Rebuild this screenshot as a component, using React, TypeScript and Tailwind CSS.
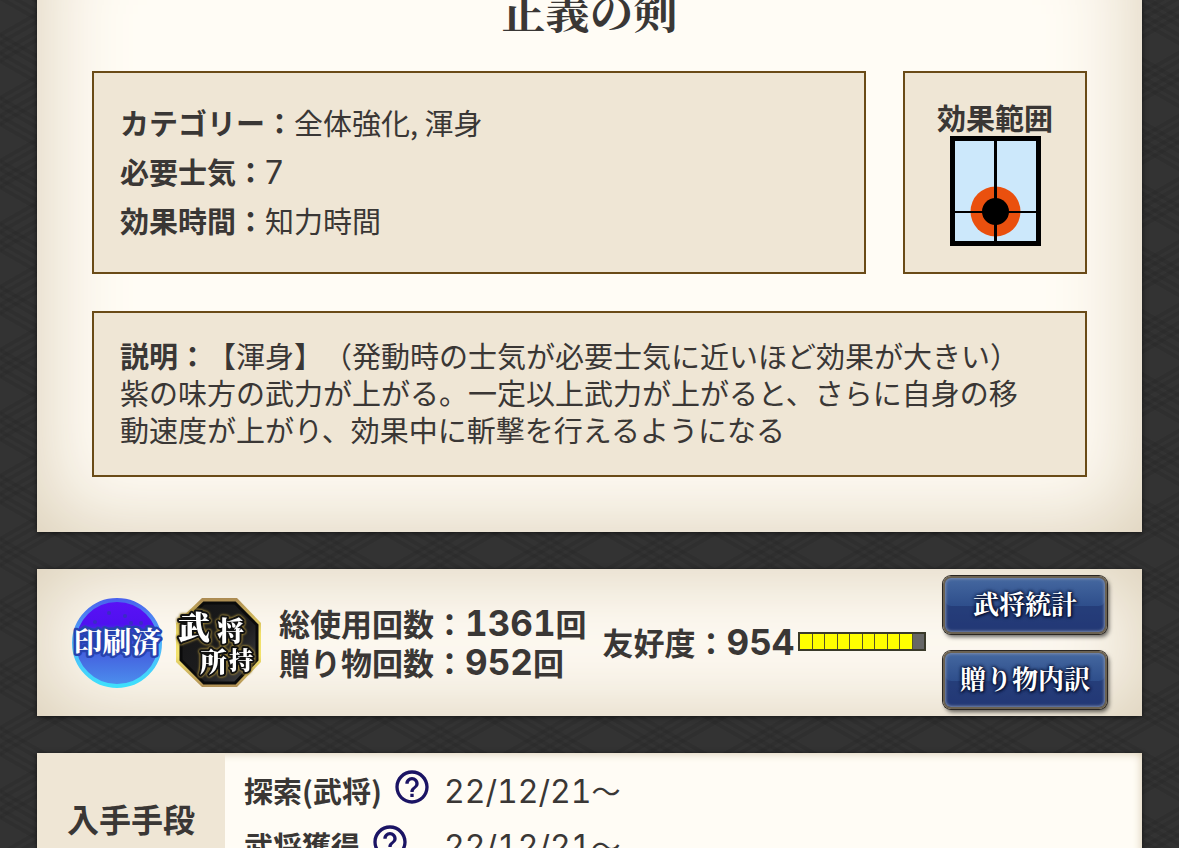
import type { ReactNode } from "react";
import { MdHelpOutline } from "react-icons/md";

const sans = "font-['Noto_Sans_CJK_JP',sans-serif]";
const serif = "font-['Noto_Serif_CJK_JP','Liberation_Serif',serif]";
const paper =
  "bg-[#fffcf5] shadow-[inset_0_0_92px_#d8cbb2,0_1px_5px_rgba(0,0,0,0.6)]";

const latticeOffsets = [-76, -68, -58, -50, -13, -5, 5, 13, 50, 58, 68, 76];

function Backdrop() {
  return (
    <svg aria-hidden="true" className="absolute inset-0 -z-10 h-full w-full">
      <defs>
        <pattern id="lattice" width="110" height="63" y="48" patternUnits="userSpaceOnUse">
          <rect width="110" height="63" fill="#333333" />
          <g stroke="#262626" strokeOpacity="0.32" strokeWidth="4">
            {latticeOffsets.map((d) => (
              <g key={d}>
                <path d={`M0 ${d} L110 ${63 + d}`} />
                <path d={`M0 ${63 + d} L110 ${d}`} />
              </g>
            ))}
          </g>
        </pattern>
      </defs>
      <rect width="100%" height="100%" fill="url(#lattice)" />
    </svg>
  );
}

function Box({ className = "", children }: { className?: string; children: ReactNode }) {
  return (
    <div className={`border-2 border-[#6a4b17] bg-[#efe6d5] px-[26px] ${className}`}>{children}</div>
  );
}

function RangeDiagram() {
  return (
    <svg role="img" aria-label="自身中心の円" viewBox="0 0 91 110" className="h-[110px] w-[91px]">
      <rect width="91" height="110" fill="#000" />
      <rect x="5" y="5" width="81" height="100" fill="#cce8fb" />
      <circle cx="45.5" cy="75.5" r="25" fill="#ea500e" />
      <path d="M5 76 H86" stroke="#000" strokeWidth="2" />
      <path d="M45.5 5 V105" stroke="#000" strokeWidth="3" />
      <circle cx="45.5" cy="75.5" r="13.5" fill="#000" />
    </svg>
  );
}

function PrintedBadge() {
  return (
    <svg role="img" aria-label="印刷済" viewBox="0 0 92 90" className="h-[90px] w-[92px] shrink-0">
      <defs>
        <linearGradient id="orb" x1="0" y1="0" x2="0" y2="1">
          <stop offset="0" stopColor="#5a12f6" />
          <stop offset="0.28" stopColor="#5010f0" />
          <stop offset="0.38" stopColor="#3a3fdc" />
          <stop offset="0.65" stopColor="#4565e0" />
          <stop offset="1" stopColor="#4c90ee" />
        </linearGradient>
        <linearGradient id="rim" x1="0" y1="0" x2="0" y2="1">
          <stop offset="0" stopColor="#4a63ee" />
          <stop offset="0.5" stopColor="#4fb4fa" />
          <stop offset="1" stopColor="#3ee0fc" />
        </linearGradient>
      </defs>
      <circle cx="46" cy="45" r="43" fill="url(#orb)" stroke="url(#rim)" strokeWidth="4" />
      <g fill="#3a2cc4">
        <circle cx="38" cy="15" r="2" />
        <circle cx="54" cy="18" r="2" />
        <circle cx="24" cy="24" r="2" />
        <circle cx="60" cy="25" r="2" />
        <circle cx="70" cy="25" r="2" />
      </g>
      <text
        x="46"
        y="55"
        textAnchor="middle"
        fill="#fff"
        stroke="#2743b0"
        strokeWidth="5"
        strokeLinejoin="round"
        paintOrder="stroke"
        className={`${serif} text-[29px] font-bold`}
      >
        印刷済
      </text>
    </svg>
  );
}

function OwnedBadge() {
  return (
    <svg role="img" aria-label="武将所持" viewBox="0 0 88 90" className="h-[90px] w-[88px] shrink-0">
      <defs>
        <linearGradient id="gold" x1="0" y1="0" x2="0" y2="1">
          <stop offset="0" stopColor="#ab8a52" />
          <stop offset="0.4" stopColor="#f0df6a" />
          <stop offset="0.65" stopColor="#f2e26c" />
          <stop offset="1" stopColor="#b08f55" />
        </linearGradient>
        <linearGradient id="ink" x1="0" y1="0" x2="1" y2="1">
          <stop offset="0" stopColor="#151515" />
          <stop offset="0.6" stopColor="#1c1c1e" />
          <stop offset="1" stopColor="#4a4a4c" />
        </linearGradient>
      </defs>
      <path d="M27 0 H62 L86 25 V64 L62 89 H27 L1 64 V25 Z" fill="url(#gold)" />
      <path
        d="M29 5 H60 L82 27 V62 L60 85 H29 L6 62 V27 Z"
        fill="url(#ink)"
        stroke="#0b0b0b"
        strokeWidth="3"
      />
      <g
        fill="#fff"
        stroke="#111"
        strokeWidth="4"
        strokeLinejoin="round"
        paintOrder="stroke"
        className={`${serif} font-black [filter:drop-shadow(0_0_1px_#9a8238)_drop-shadow(0_0_1px_#9a8238)]`}
      >
        <text x="3" y="41" className="text-[32px]">武</text>
        <text x="42" y="43" className="text-[27px]">将</text>
        <text x="25" y="74" className="text-[27px]">所</text>
        <text x="54" y="71" className="text-[24px]">持</text>
      </g>
    </svg>
  );
}

function BlueButton({ children }: { children: ReactNode }) {
  return (
    <button
      type="button"
      className={`${serif} flex h-[58px] w-[164px] items-center justify-center rounded-lg border-2 border-[#6b6252] bg-linear-to-b from-[#4568a0] from-0% via-[#2f4f8c] via-50% to-[#2b4585] to-100% pb-1 text-[26px] leading-none font-bold text-white shadow-[inset_0_0_3px_1px_#7b8cae,inset_0_-26px_0_rgba(20,32,90,0.35),0_0_0_1px_#2a2622,2px_3px_4px_rgba(0,0,0,0.6)] [text-shadow:0_0_3px_#0b1638,0_0_3px_#0b1638,0_0_4px_#0b1638,1px_1px_2px_#0b1638]`}
    >
      {children}
    </button>
  );
}

function Num({ children }: { children: ReactNode }) {
  return (
    <span className="font-['Inter',sans-serif] text-[35px] leading-none tabular-nums">
      {children}
    </span>
  );
}

function Gauge({ filled }: { filled: number }) {
  return (
    <div
      role="meter"
      aria-label="友好度"
      aria-valuemin={0}
      aria-valuemax={10}
      aria-valuenow={filled}
      className="mx-1 grid h-[19px] w-32 grid-cols-10 gap-px border-2 border-[#3a3a2a] bg-[#55552a]"
    >
      {Array.from({ length: 10 }, (_, i) => (
        <span key={i} className={i < filled ? "bg-[#ffff00]" : "bg-[#666666]"} />
      ))}
    </div>
  );
}

function SourceCell({ name, className = "" }: { name: string; className?: string }) {
  return (
    <th scope="row" className={`w-[219px] pl-[19px] text-left ${className}`}>
      <span className="flex h-[55px] items-center gap-[10px] whitespace-nowrap">
        {name}
        <a href="#help" aria-label={`${name}の説明`} className="-mt-2 text-[#1b1464]">
          <MdHelpOutline className="size-10" />
        </a>
      </span>
    </th>
  );
}

function DateText() {
  return (
    <>
      <span className="font-['Inter',sans-serif] text-[32px] leading-none tabular-nums">
        22/12/21
      </span>
      〜
    </>
  );
}

export default function App() {
  return (
    <main
      className={`${sans} relative isolate flex h-screen flex-col gap-[37px] overflow-hidden px-[37px] text-[29px] leading-[37px] text-[#3a3735] [text-spacing-trim:space-all]`}
    >
      <Backdrop />

      <section className={`${paper} -mt-24 shrink-0 px-[55px] pt-[84px] pb-[55px]`}>
        <h1 className={`${serif} text-center text-[44px] leading-[44px] font-bold`}>正義の剣</h1>
        <div className="mt-[39px] flex gap-[37px]">
          <Box className="flex flex-1 flex-col justify-center gap-3 pb-[2px]">
            <p><b>カテゴリー：</b>全体強化, 渾身</p>
            <p>
              <b>必要士気：</b>
              <span className="font-['Inter',sans-serif] text-[32px] leading-none">7</span>
            </p>
            <p><b>効果時間：</b>知力時間</p>
          </Box>
          <Box className="flex w-[184px] flex-col items-center py-[26px]">
            <b>効果範囲</b>
            <RangeDiagram />
          </Box>
        </div>
        <Box className="mt-[37px] pt-6 pb-[27px]">
          <p>
            <b>説明：</b>【渾身】（発動時の士気が必要士気に近いほど効果が大きい）
            <br />
            紫の味方の武力が上がる。一定以上武力が上がると、さらに自身の移
            <br />
            動速度が上がり、効果中に斬撃を行えるようになる
          </p>
        </Box>
      </section>

      <section className={`${paper} flex h-[147px] shrink-0 items-center pr-[35px] pl-[34px]`}>
        <div className="flex items-center gap-3">
          <PrintedBadge />
          <OwnedBadge />
        </div>
        <div className="ml-4 flex flex-1 items-center gap-4 pb-[2px] text-[31px] leading-[39px] font-bold whitespace-nowrap">
          <div>
            <p>総使用回数：<Num>1361</Num>回</p>
            <p>贈り物回数：<Num>952</Num>回</p>
          </div>
          <div className="flex items-center">
            <p>友好度：<Num>954</Num></p>
            <Gauge filled={9} />
          </div>
        </div>
        <div className="flex flex-col gap-[17px]">
          <BlueButton>武将統計</BlueButton>
          <BlueButton>贈り物内訳</BlueButton>
        </div>
      </section>

      <section className="shrink-0 bg-[#fffcf5] shadow-[0_1px_5px_rgba(0,0,0,0.6)]">
        <table className="w-full shadow-[inset_0_0_10px_#d4c6aa]">
          <tbody>
            <tr>
              <th scope="rowgroup" rowSpan={2} className="w-[188px] bg-[#efe6d5] text-[32px]">
                入手手段
              </th>
              <SourceCell name="探索(武将)" className="pt-[10px]" />
              <td className="pt-[10px]"><DateText /></td>
            </tr>
            <tr>
              <SourceCell name="武将獲得" className="pb-[10px]" />
              <td className="pb-[10px]"><DateText /></td>
            </tr>
          </tbody>
        </table>
      </section>
    </main>
  );
}
